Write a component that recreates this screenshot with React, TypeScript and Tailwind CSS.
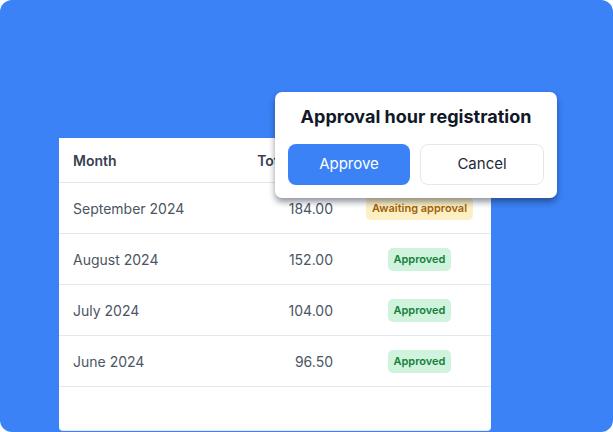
import React from "react";

const rows = [
  { month: "September 2024", total: "184.00", status: "awaiting" },
  { month: "August 2024", total: "152.00", status: "approved" },
  { month: "July 2024", total: "104.00", status: "approved" },
  { month: "June 2024", total: "96.50", status: "approved" },
];

export default function App() {
  return (
    <div className="w-[613px] h-[432px] bg-white" style={{ fontFamily: "Inter, 'Noto Sans', sans-serif" }}>
      <div className="relative w-[613px] h-[432px] bg-[#3b82f6] rounded-[12px] overflow-hidden pt-[138px] pl-[59px]">
        <div className="w-[432px] h-[293px] bg-white rounded-b-[4px] border-b border-[#e5e7eb] flex flex-col">
          <div className="flex items-center h-[45px] border-b border-[#e5e7eb] text-[14px] font-semibold text-[#374151]">
            <div className="w-[185px] pl-[14px]">Month</div>
            <div className="w-[89px] text-right whitespace-nowrap">Total hours</div>
            <div className="flex-1 ml-[15px] text-center">Status</div>
          </div>
          {rows.map((r) => (
            <div key={r.month} className="flex items-center h-[51px] border-b border-[#e5e7eb] text-[14px] text-[#4b5563]">
              <div className="w-[185px] pl-[14px]">{r.month}</div>
              <div className="w-[89px] text-right">{r.total}</div>
              <div className="flex-1 ml-[15px] flex justify-center">
                {r.status === "awaiting" ? (
                  <span className="px-[6px] py-[4px] leading-[15px] rounded-[5px] bg-[#fcefc4] text-[#a16207] text-[11px] font-semibold">
                    Awaiting approval
                  </span>
                ) : (
                  <span className="px-[6px] py-[4px] leading-[15px] rounded-[5px] bg-[#cff3dc] text-[#15803d] text-[11px] font-semibold">
                    Approved
                  </span>
                )}
              </div>
            </div>
          ))}
        </div>

        <div className="absolute left-[275px] top-[92px] w-[282px] h-[106px] bg-white rounded-[7px] shadow-[0_4px_6px_rgba(15,23,42,0.45)] px-[13px] pt-[12px] flex flex-col items-center">
          <div className="text-[18px] font-bold text-[#111827] leading-[26px]">Approval hour registration</div>
          <div className="mt-[14px] w-full flex gap-[10px]">
            <button className="flex-1 h-[41px] rounded-[8px] bg-[#3b82f6] text-white text-[15px]">Approve</button>
            <button className="flex-1 h-[41px] rounded-[8px] bg-white border border-[#e5e7eb] text-[#1f2937] text-[15px]">Cancel</button>
          </div>
        </div>
      </div>
    </div>
  );
}
